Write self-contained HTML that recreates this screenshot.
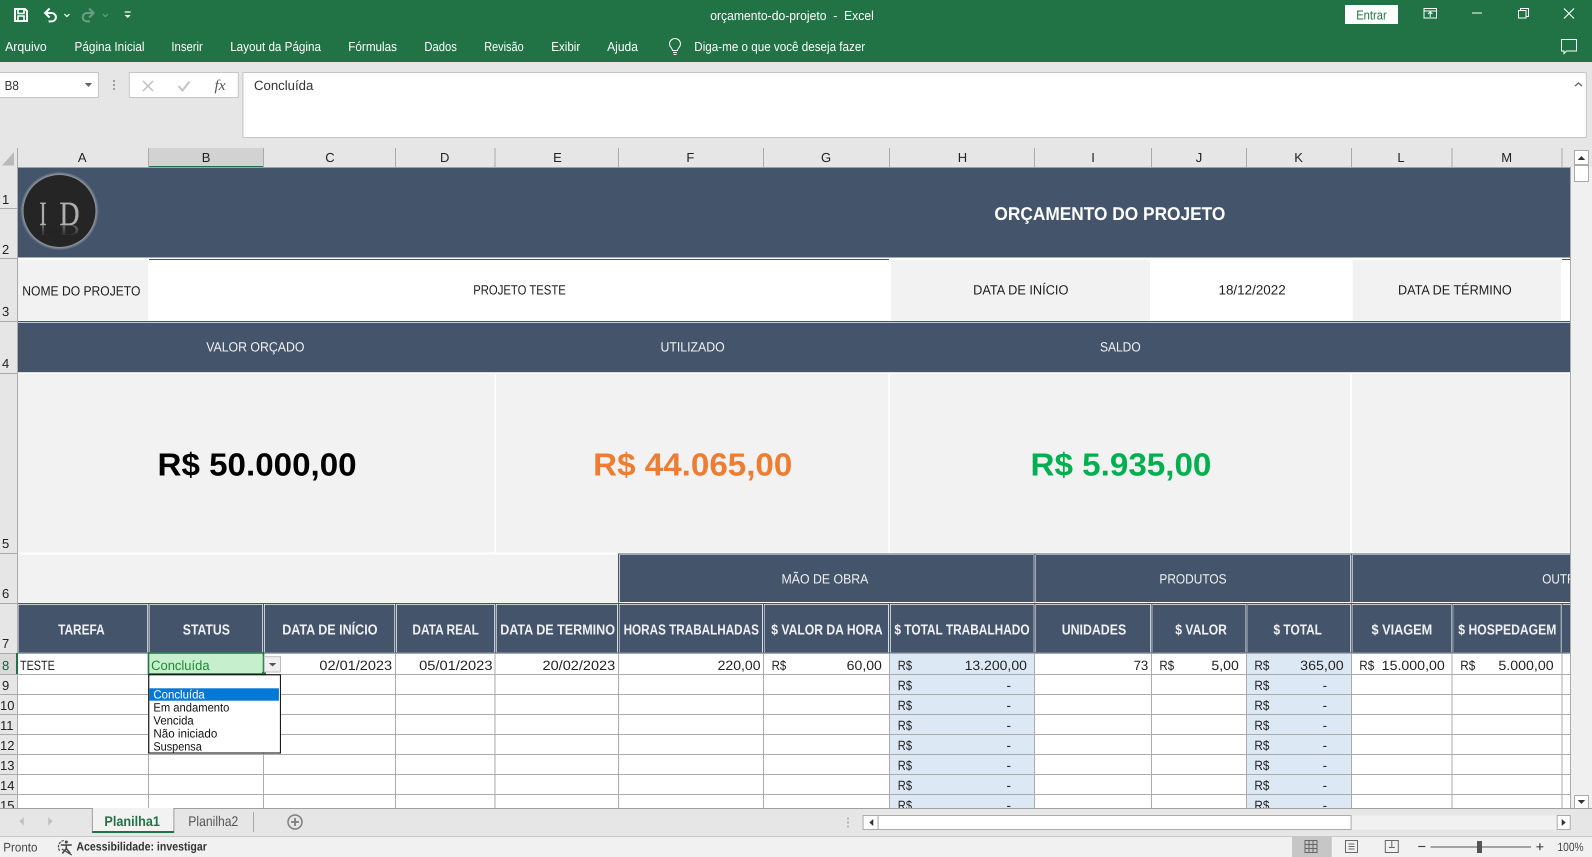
<!DOCTYPE html>
<html lang="pt-BR"><head><meta charset="utf-8"><title>orçamento-do-projeto - Excel</title>
<style>
html,body{margin:0;padding:0;width:1592px;height:857px;overflow:hidden;background:#e6e6e6}
svg{display:block;font-family:"Liberation Sans",sans-serif;text-rendering:geometricPrecision}
.r{font-size:13px;fill:#fff}
.h{font-size:13px;fill:#222}
.n{font-size:13px;fill:#222}
.c{font-size:13.5px;fill:#222}
.l{font-size:13.5px;fill:#1c1c1c}
.w{font-size:13.5px;fill:#f2f2f2}
.b{font-size:14.5px;font-weight:700;fill:#eef0f3}
.big{font-size:32px;font-weight:700}
.d{font-size:12px;fill:#111}
</style></head><body>
<svg width="1592" height="857" viewBox="0 0 1592 857" xmlns="http://www.w3.org/2000/svg">
<defs>
<radialGradient id="glow" cx=".5" cy=".5" r=".5"><stop offset=".9" stop-color="#b5b5b5"/><stop offset="1" stop-color="#8b97a6" stop-opacity=".2"/></radialGradient>
<linearGradient id="fade" x1="0" y1="0" x2="0" y2="1"><stop offset="0" stop-color="#242424" stop-opacity=".15"/><stop offset="1" stop-color="#242424"/></linearGradient>
<clipPath id="sheet"><rect x="0" y="148" width="1570" height="660"/></clipPath>
</defs>
<!-- title bar -->
<rect width="1592" height="62" fill="#217346"/>
<rect y="62" width="1592" height="86" fill="#e6e6e6"/>
<g fill="none" stroke="#fff" stroke-width="2">
<path d="M15 9h10l2 2v10H15z"/><path d="M18 9v4.500h6V9M18 21v-5h6v5" stroke-width="1.600"/>
<g transform="translate(.6 0)"><path d="M49 8.500L44.500 13L49 17.500M45 13H51a4.300 4.200 0 0 1 0 8.400H48"/></g>
<path d="M64.400 14l2.500 2.500 2.500-2.500" stroke-width="1.200"/>
<g opacity=".32" transform="translate(1.100 0)"><path d="M88 8.500L92.500 13L88 17.500M92 13H86a4.300 4.200 0 0 0 0 8.400H89"/><path d="M101.800 14l2.500 2.500 2.500-2.500" stroke-width="1.200"/></g>
<path d="M124.700 12h6" stroke-width="1.200"/>
</g>
<path d="M124.700 15h6l-3 3z" fill="#fff"/>
<text x="710.200" y="20" font-size="13" fill="#fff" textLength="163.600" lengthAdjust="spacingAndGlyphs" xml:space="preserve">orçamento-do-projeto  -  Excel</text>
<rect x="1345" y="5" width="53" height="19" fill="#fff" rx=".5"/>
<text x="1356.200" y="19.500" font-size="13" fill="#217346" textLength="30.500" lengthAdjust="spacingAndGlyphs">Entrar</text>
<g fill="none" stroke="#fff" stroke-width="1">
<g transform="translate(6 0)"><rect x="1418" y="8.500" width="12.500" height="9.500"/><path d="M1418 11h12.500M1424.200 17v-5M1422 14l2.200-2.200 2.200 2.200"/></g>
<path d="M1472 13h10"/>
<g transform="translate(8 0)"><rect x="1510.500" y="10.500" width="7.500" height="7.500"/><path d="M1512.500 10.500v-2h8v8h-2.500"/></g>
<path d="M1564 8.500l10 10M1574 8.500l-10 10" stroke-width="1.100"/>
<path d="M1561.500 39.500h15v11.500h-10l-2.500 2.500v-2.500h-2.500z"/>
</g>
<!-- ribbon tabs -->
<text class="r" x="5.100" y="51" textLength="41.600" lengthAdjust="spacingAndGlyphs">Arquivo</text>
<text class="r" x="74.500" y="51" textLength="70" lengthAdjust="spacingAndGlyphs">Página Inicial</text>
<text class="r" x="171.400" y="51" textLength="31.400" lengthAdjust="spacingAndGlyphs">Inserir</text>
<text class="r" x="230.200" y="51" textLength="90.800" lengthAdjust="spacingAndGlyphs">Layout da Página</text>
<text class="r" x="348.300" y="51" textLength="48.700" lengthAdjust="spacingAndGlyphs">Fórmulas</text>
<text class="r" x="424.400" y="51" textLength="32.400" lengthAdjust="spacingAndGlyphs">Dados</text>
<text class="r" x="484.200" y="51" textLength="39.500" lengthAdjust="spacingAndGlyphs">Revisão</text>
<text class="r" x="551.300" y="51" textLength="28.900" lengthAdjust="spacingAndGlyphs">Exibir</text>
<text class="r" x="607.100" y="51" textLength="30.900" lengthAdjust="spacingAndGlyphs">Ajuda</text>
<path transform="translate(2 0)" d="M670.500 50.500c0-2.500-3-3.500-3-6.500a5.500 5.500 0 0 1 11 0c0 3-3 4-3 6.500zM671 52.500h4M671.500 54.500h3" fill="none" stroke="#fff" stroke-width="1"/>
<text class="r" x="694.300" y="51" textLength="170.900" lengthAdjust="spacingAndGlyphs">Diga-me o que você deseja fazer</text>
<!-- formula bar -->
<rect x="-1" y="72.500" width="99.400" height="25" fill="#fff" stroke="#c6c6c6"/>
<text x="4.600" y="90" font-size="13" fill="#333" textLength="14.200" lengthAdjust="spacingAndGlyphs">B8</text>
<path d="M84.700 83h7.500l-3.750 4z" fill="#666"/>
<g fill="#a0a0a0"><rect x="113" y="80" width="2" height="2"/><rect x="113" y="84" width="2" height="2"/><rect x="113" y="88" width="2" height="2"/></g>
<rect x="129.300" y="72.500" width="109" height="25" fill="#fff" stroke="#c6c6c6"/>
<path d="M143 81l10 10M153 81l-10 10" stroke="#bdbdbd" stroke-width="1.400" fill="none"/>
<path d="M178.500 86l4 4.500 7-9" stroke="#c4c4c4" stroke-width="2" fill="none"/>
<text x="214.500" y="90" font-family="Liberation Serif" font-style="italic" font-size="15" fill="#555" textLength="11" lengthAdjust="spacingAndGlyphs">fx</text>
<rect x="242.900" y="72.500" width="1343.400" height="65" fill="#fff" stroke="#c6c6c6"/>
<text x="254" y="90" font-size="13.500" fill="#333" textLength="59.300" lengthAdjust="spacingAndGlyphs">Concluída</text>
<path d="M1575 86l3.500-3 3.500 3" stroke="#666" stroke-width="1.400" fill="none"/>
<!-- column headers -->
<rect x="148" y="148" width="115.600" height="18" fill="#d2d2d2"/>
<rect x="148" y="166" width="115.600" height="1.700" fill="#217346"/>
<path d="M14 152v13.500H2z" fill="#b9b9b9"/>
<g fill="#ababab"><rect x="148" y="148" width="1" height="19"/><rect x="263" y="148" width="1" height="19"/><rect x="395" y="148" width="1" height="19"/><rect x="494.500" y="148" width="1" height="19"/><rect x="618" y="148" width="1" height="19"/><rect x="763" y="148" width="1" height="19"/><rect x="889" y="148" width="1" height="19"/><rect x="1034" y="148" width="1" height="19"/><rect x="1151" y="148" width="1" height="19"/><rect x="1246" y="148" width="1" height="19"/><rect x="1351" y="148" width="1" height="19"/><rect x="1451.500" y="148" width="1" height="19"/><rect x="1561.500" y="148" width="1" height="19"/><rect x="17" y="148" width="1" height="660"/></g>
<rect x="17" y="167" width="1553" height="1" fill="#a0a0a0"/>
<g>
<text class="h" x="82.200" y="162" text-anchor="middle">A</text><text class="h" x="206.100" y="162" text-anchor="middle">B</text><text class="h" x="330" y="162" text-anchor="middle">C</text><text class="h" x="444.700" y="162" text-anchor="middle">D</text><text class="h" x="557.400" y="162" text-anchor="middle">E</text><text class="h" x="690.400" y="162" text-anchor="middle">F</text><text class="h" x="826" y="162" text-anchor="middle">G</text><text class="h" x="962.500" y="162" text-anchor="middle">H</text><text class="h" x="1093" y="162" text-anchor="middle">I</text><text class="h" x="1199" y="162" text-anchor="middle">J</text><text class="h" x="1298.600" y="162" text-anchor="middle">K</text><text class="h" x="1401" y="162" text-anchor="middle">L</text><text class="h" x="1506.700" y="162" text-anchor="middle">M</text>
</g>
<!-- right scroll area -->
<rect x="1570" y="167" width="22" height="641" fill="#f0f0f0"/>
<rect x="1574.500" y="150.500" width="14" height="14" fill="#fff" stroke="#ababab"/>
<path d="M1577.700 160h7.500l-3.750-4z" fill="#333"/>
<rect x="1574.500" y="165.500" width="14" height="16" fill="#fff" stroke="#ababab"/>
<rect x="1574.500" y="795.500" width="14" height="13" fill="#fff" stroke="#ababab"/>
<path d="M1577.700 800h7.500l-3.750 4z" fill="#333"/>
<!-- row headers -->
<rect x="0" y="653" width="17" height="21" fill="#d9d9d9"/>
<g fill="#ababab"><rect y="208" width="17" height="1"/><rect y="258" width="17" height="1"/><rect y="321" width="17" height="1"/><rect y="373" width="17" height="1"/><rect y="553" width="17" height="1"/><rect y="603" width="17" height="1"/><rect y="653" width="17" height="1"/><rect y="674" width="17" height="1"/><rect y="694" width="17" height="1"/><rect y="714" width="17" height="1"/><rect y="734" width="17" height="1"/><rect y="754" width="17" height="1"/><rect y="774" width="17" height="1"/><rect y="794" width="17" height="1"/></g>
<rect x="16" y="653" width="2" height="21" fill="#217346"/>
<g clip-path="url(#sheet)">
<text class="n" x="2" y="204">1</text><text class="n" x="2" y="254">2</text><text class="n" x="2" y="316">3</text><text class="n" x="2" y="368">4</text><text class="n" x="2" y="548">5</text><text class="n" x="2" y="598">6</text><text class="n" x="2" y="648">7</text><text class="n" x="2" y="670" style="fill:#1a5f3a">8</text><text class="n" x="2" y="690">9</text><text class="n" x="0" y="710">10</text><text class="n" x="0" y="730">11</text><text class="n" x="0" y="750">12</text><text class="n" x="0" y="770">13</text><text class="n" x="0" y="790">14</text><text class="n" x="0" y="810">15</text>
</g>
<!-- sheet base -->
<rect x="18" y="168" width="1552" height="640" fill="#fff"/>
<!-- rows 1-2 -->
<rect x="18" y="168" width="1552" height="89.500" fill="#44546a"/>
<circle cx="59.500" cy="211" r="39" fill="url(#glow)"/>
<circle cx="59.500" cy="211" r="36" fill="#252525"/>
<text x="39.500" y="225" font-family="Liberation Serif" font-size="34" fill="#adadad" stroke="#adadad" stroke-width=".4" textLength="7" lengthAdjust="spacingAndGlyphs">I</text>
<text x="59.500" y="225" font-family="Liberation Serif" font-size="34" fill="#adadad" stroke="#adadad" stroke-width=".4" textLength="20" lengthAdjust="spacingAndGlyphs">D</text>
<g transform="matrix(1 0 0 -.45 0 326.300)"><text x="39.500" y="225" font-family="Liberation Serif" font-size="34" fill="#777" textLength="7" lengthAdjust="spacingAndGlyphs">I</text><text x="59.500" y="225" font-family="Liberation Serif" font-size="34" fill="#777" textLength="20" lengthAdjust="spacingAndGlyphs">D</text></g>
<rect x="36" y="225" width="47" height="13" fill="url(#fade)"/>
<text x="994.400" y="220" font-size="18.500" font-weight="700" fill="#fff" textLength="231" lengthAdjust="spacingAndGlyphs">ORÇAMENTO DO PROJETO</text>
<!-- row 3 -->
<rect x="149" y="259" width="740" height="1" fill="#44546a"/>
<rect x="1562" y="259" width="8" height="1" fill="#44546a"/>
<rect x="18" y="260" width="130" height="60.500" fill="#f2f2f2"/>
<rect x="891" y="260" width="259" height="60.500" fill="#f2f2f2"/>
<rect x="1352.600" y="260" width="208.200" height="60.500" fill="#f2f2f2"/>
<text class="l" x="22.300" y="295.500" textLength="118.100" lengthAdjust="spacingAndGlyphs">NOME DO PROJETO</text>
<text class="l" x="473.200" y="294.500" textLength="92.600" lengthAdjust="spacingAndGlyphs">PROJETO TESTE</text>
<text class="l" x="973.100" y="294.500" textLength="95.300" lengthAdjust="spacingAndGlyphs">DATA DE INÍCIO</text>
<text class="l" x="1218.500" y="294.500" textLength="67.200" lengthAdjust="spacingAndGlyphs">18/12/2022</text>
<text class="l" x="1398" y="294.500" textLength="113.700" lengthAdjust="spacingAndGlyphs">DATA DE TÉRMINO</text>
<rect x="18" y="321" width="1552" height="1" fill="#44546a"/>
<!-- row 4 -->
<rect x="18" y="322.700" width="1552" height="49.500" fill="#44546a"/>
<text class="w" x="206.200" y="351.500" textLength="98.300" lengthAdjust="spacingAndGlyphs">VALOR ORÇADO</text>
<text class="w" x="660.500" y="351.500" textLength="64.200" lengthAdjust="spacingAndGlyphs">UTILIZADO</text>
<text class="w" x="1100" y="351.500" textLength="40.700" lengthAdjust="spacingAndGlyphs">SALDO</text>
<!-- row 5 -->
<rect x="18" y="374" width="476.500" height="178.500" fill="#f2f2f2"/>
<rect x="496" y="374" width="392.200" height="178.500" fill="#f2f2f2"/>
<rect x="890" y="374" width="460" height="178.500" fill="#f2f2f2"/>
<rect x="1352" y="374" width="218" height="178.500" fill="#f2f2f2"/>
<text class="big" x="157.500" y="475.500" fill="#000" textLength="199.100" lengthAdjust="spacingAndGlyphs">R$ 50.000,00</text>
<text class="big" x="593.200" y="475.500" fill="#ed7d31" textLength="199.100" lengthAdjust="spacingAndGlyphs">R$ 44.065,00</text>
<text class="big" x="1030.500" y="475.500" fill="#00b050" textLength="180.900" lengthAdjust="spacingAndGlyphs">R$ 5.935,00</text>
<!-- row 6 -->
<rect x="18" y="554.500" width="600" height="48" fill="#f2f2f2"/>
<rect x="618" y="553.500" width="952" height="1" fill="#44546a"/>
<rect x="619.700" y="555" width="414" height="47" fill="#44546a"/>
<rect x="1035.800" y="555" width="314.300" height="47" fill="#44546a"/>
<rect x="1352.600" y="555" width="217.400" height="47" fill="#44546a"/>
<rect x="618" y="553.500" width="1" height="49" fill="#44546a"/><rect x="1034.300" y="553.500" width="1" height="49" fill="#44546a"/><rect x="1350.800" y="553.500" width="1" height="49" fill="#44546a"/>
<text class="w" x="781.500" y="583.500" textLength="86.900" lengthAdjust="spacingAndGlyphs">MÃO DE OBRA</text>
<text class="w" x="1159.400" y="583.500" textLength="67.200" lengthAdjust="spacingAndGlyphs">PRODUTOS</text>
<svg x="1538" y="560" width="32" height="40"><text class="w" x="4.300" y="23.500" textLength="50" lengthAdjust="spacingAndGlyphs">OUTROS</text></svg>
<!-- row 7 -->
<rect x="18" y="603" width="1552" height="1" fill="#44546a"/>
<rect x="18" y="652.500" width="1552" height="1" fill="#44546a"/>
<g fill="#44546a">
<rect x="18.500" y="604.700" width="128.800" height="47.600"/><rect x="149.800" y="604.700" width="112.500" height="47.600"/><rect x="264.700" y="604.700" width="129.700" height="47.600"/><rect x="396.800" y="604.700" width="97.300" height="47.600"/><rect x="496.600" y="604.700" width="120.600" height="47.600"/><rect x="619.500" y="604.700" width="142.700" height="47.600"/><rect x="764.500" y="604.700" width="123.700" height="47.600"/><rect x="890.700" y="604.700" width="143" height="47.600"/><rect x="1035.800" y="604.700" width="114.500" height="47.600"/><rect x="1152.600" y="604.700" width="93" height="47.600"/><rect x="1247.600" y="604.700" width="102.500" height="47.600"/><rect x="1352.400" y="604.700" width="98.800" height="47.600"/><rect x="1453.200" y="604.700" width="107.600" height="47.600"/><rect x="1562.500" y="604.700" width="7.500" height="47.600"/>
<rect x="148.300" y="603" width="1" height="50"/><rect x="263" y="603" width="1" height="50"/><rect x="395.100" y="603" width="1" height="50"/><rect x="494.800" y="603" width="1" height="50"/><rect x="618" y="603" width="1" height="50"/><rect x="763" y="603" width="1" height="50"/><rect x="889" y="603" width="1" height="50"/><rect x="1034.300" y="603" width="1" height="50"/><rect x="1151.300" y="603" width="1" height="50"/><rect x="1246.300" y="603" width="1" height="50"/><rect x="1350.800" y="603" width="1" height="50"/><rect x="1451.700" y="603" width="1" height="50"/><rect x="1561.500" y="603" width="1" height="50"/>
</g>
<text class="b" x="58.100" y="634.300" textLength="46.600" lengthAdjust="spacingAndGlyphs">TAREFA</text>
<text class="b" x="182.800" y="634.300" textLength="47.100" lengthAdjust="spacingAndGlyphs">STATUS</text>
<text class="b" x="282.200" y="634.300" textLength="95.300" lengthAdjust="spacingAndGlyphs">DATA DE INÍCIO</text>
<text class="b" x="412.400" y="634.300" textLength="66.500" lengthAdjust="spacingAndGlyphs">DATA REAL</text>
<text class="b" x="500.200" y="634.300" textLength="114.800" lengthAdjust="spacingAndGlyphs">DATA DE TERMINO</text>
<text class="b" x="623.600" y="634.300" textLength="135.300" lengthAdjust="spacingAndGlyphs">HORAS TRABALHADAS</text>
<text class="b" x="771.300" y="634.300" textLength="111.300" lengthAdjust="spacingAndGlyphs">$ VALOR DA HORA</text>
<text class="b" x="894.400" y="634.300" textLength="135.200" lengthAdjust="spacingAndGlyphs">$ TOTAL TRABALHADO</text>
<text class="b" x="1061.700" y="634.300" textLength="64.500" lengthAdjust="spacingAndGlyphs">UNIDADES</text>
<text class="b" x="1175.300" y="634.300" textLength="51.600" lengthAdjust="spacingAndGlyphs">$ VALOR</text>
<text class="b" x="1273.500" y="634.300" textLength="48.400" lengthAdjust="spacingAndGlyphs">$ TOTAL</text>
<text class="b" x="1371.500" y="634.300" textLength="60.700" lengthAdjust="spacingAndGlyphs">$ VIAGEM</text>
<text class="b" x="1458.300" y="634.300" textLength="98.100" lengthAdjust="spacingAndGlyphs">$ HOSPEDAGEM</text>
<!-- data area fills -->
<rect x="889.500" y="654" width="144.500" height="154" fill="#dce9f5"/>
<rect x="1246.800" y="654" width="104.200" height="154" fill="#dce9f5"/>
<rect x="149" y="654" width="114" height="20" fill="#c6efce"/>
<!-- gridlines -->
<g fill="#ababab">
<rect x="18" y="674" width="1552" height="1"/><rect x="18" y="694" width="1552" height="1"/><rect x="18" y="714" width="1552" height="1"/><rect x="18" y="734" width="1552" height="1"/><rect x="18" y="754" width="1552" height="1"/><rect x="18" y="774" width="1552" height="1"/><rect x="18" y="794" width="1552" height="1"/>
<rect x="148" y="653" width="1" height="155"/><rect x="263" y="653" width="1" height="155"/><rect x="395" y="653" width="1" height="155"/><rect x="494.500" y="653" width="1" height="155"/><rect x="618" y="653" width="1" height="155"/><rect x="763" y="653" width="1" height="155"/><rect x="889" y="653" width="1" height="155"/><rect x="1034" y="653" width="1" height="155"/><rect x="1151" y="653" width="1" height="155"/><rect x="1246" y="653" width="1" height="155"/><rect x="1351" y="653" width="1" height="155"/><rect x="1451.500" y="653" width="1" height="155"/><rect x="1561.500" y="653" width="1" height="155"/>
<rect x="1570" y="167" width="1" height="642"/>
</g>
<!-- row 8 text -->
<text class="c" x="20" y="670" textLength="34.800" lengthAdjust="spacingAndGlyphs">TESTE</text>
<text class="c" x="151.100" y="670" style="fill:#1f8a2f" textLength="58.500" lengthAdjust="spacingAndGlyphs">Concluída</text>
<text class="c" x="319.400" y="670" textLength="72.700" lengthAdjust="spacingAndGlyphs">02/01/2023</text>
<text class="c" x="419.100" y="670" textLength="73.400" lengthAdjust="spacingAndGlyphs">05/01/2023</text>
<text class="c" x="542.500" y="670" textLength="72.700" lengthAdjust="spacingAndGlyphs">20/02/2023</text>
<text class="c" x="717.600" y="670" textLength="42.900" lengthAdjust="spacingAndGlyphs">220,00</text>
<text class="c" x="771.600" y="670" textLength="14.600" lengthAdjust="spacingAndGlyphs">R$</text>
<text class="c" x="846.700" y="670" textLength="35.200" lengthAdjust="spacingAndGlyphs">60,00</text>
<text class="c" x="897.800" y="670" textLength="14.200" lengthAdjust="spacingAndGlyphs">R$</text>
<text class="c" x="964.600" y="670" textLength="62.300" lengthAdjust="spacingAndGlyphs">13.200,00</text>
<text class="c" x="1133.600" y="670" textLength="14.700" lengthAdjust="spacingAndGlyphs">73</text>
<text class="c" x="1159.400" y="670" textLength="14.700" lengthAdjust="spacingAndGlyphs">R$</text>
<text class="c" x="1211.400" y="670" textLength="27.400" lengthAdjust="spacingAndGlyphs">5,00</text>
<text class="c" x="1254.400" y="670" textLength="15" lengthAdjust="spacingAndGlyphs">R$</text>
<text class="c" x="1300.200" y="670" textLength="43.500" lengthAdjust="spacingAndGlyphs">365,00</text>
<text class="c" x="1359.300" y="670" textLength="15" lengthAdjust="spacingAndGlyphs">R$</text>
<text class="c" x="1381.700" y="670" textLength="63.100" lengthAdjust="spacingAndGlyphs">15.000,00</text>
<text class="c" x="1460.300" y="670" textLength="15" lengthAdjust="spacingAndGlyphs">R$</text>
<text class="c" x="1498.400" y="670" textLength="55.300" lengthAdjust="spacingAndGlyphs">5.000,00</text>
<!-- R$ / dash columns -->
<g clip-path="url(#sheet)">
<text class="c" x="897.800" y="690" textLength="14.200" lengthAdjust="spacingAndGlyphs">R$</text><text class="c" x="1006.500" y="690">-</text>
<text class="c" x="897.800" y="710" textLength="14.200" lengthAdjust="spacingAndGlyphs">R$</text><text class="c" x="1006.500" y="710">-</text>
<text class="c" x="897.800" y="730" textLength="14.200" lengthAdjust="spacingAndGlyphs">R$</text><text class="c" x="1006.500" y="730">-</text>
<text class="c" x="897.800" y="750" textLength="14.200" lengthAdjust="spacingAndGlyphs">R$</text><text class="c" x="1006.500" y="750">-</text>
<text class="c" x="897.800" y="770" textLength="14.200" lengthAdjust="spacingAndGlyphs">R$</text><text class="c" x="1006.500" y="770">-</text>
<text class="c" x="897.800" y="790" textLength="14.200" lengthAdjust="spacingAndGlyphs">R$</text><text class="c" x="1006.500" y="790">-</text>
<text class="c" x="897.800" y="810" textLength="14.200" lengthAdjust="spacingAndGlyphs">R$</text><text class="c" x="1006.500" y="810">-</text>
<text class="c" x="1254.400" y="690" textLength="15" lengthAdjust="spacingAndGlyphs">R$</text><text class="c" x="1322.600" y="690">-</text>
<text class="c" x="1254.400" y="710" textLength="15" lengthAdjust="spacingAndGlyphs">R$</text><text class="c" x="1322.600" y="710">-</text>
<text class="c" x="1254.400" y="730" textLength="15" lengthAdjust="spacingAndGlyphs">R$</text><text class="c" x="1322.600" y="730">-</text>
<text class="c" x="1254.400" y="750" textLength="15" lengthAdjust="spacingAndGlyphs">R$</text><text class="c" x="1322.600" y="750">-</text>
<text class="c" x="1254.400" y="770" textLength="15" lengthAdjust="spacingAndGlyphs">R$</text><text class="c" x="1322.600" y="770">-</text>
<text class="c" x="1254.400" y="790" textLength="15" lengthAdjust="spacingAndGlyphs">R$</text><text class="c" x="1322.600" y="790">-</text>
<text class="c" x="1254.400" y="810" textLength="15" lengthAdjust="spacingAndGlyphs">R$</text><text class="c" x="1322.600" y="810">-</text>
</g>
<!-- selected cell + dropdown -->
<rect x="148.500" y="653" width="115" height="21" fill="none" stroke="#217346" stroke-width="1.600"/>
<rect x="262" y="672" width="4" height="4" fill="#217346"/>
<rect x="264.300" y="656.700" width="16.200" height="15.300" fill="#f0f0f0" stroke="#bdbdbd" stroke-width="1"/>
<path d="M268.800 663h7.500l-3.750 3.500z" fill="#555"/>
<rect x="148.800" y="674.800" width="131.600" height="78.200" fill="#fff" stroke="#000" stroke-width="1"/>
<rect x="149.500" y="688.300" width="129.400" height="12.400" fill="#0078d7"/>
<text class="d" x="153.400" y="698.500" style="fill:#fff" textLength="51.400" lengthAdjust="spacingAndGlyphs">Concluída</text>
<text class="d" x="153.400" y="711.700" textLength="76" lengthAdjust="spacingAndGlyphs">Em andamento</text>
<text class="d" x="153.400" y="724.700" textLength="40.300" lengthAdjust="spacingAndGlyphs">Vencida</text>
<text class="d" x="153.400" y="737.700" textLength="63.900" lengthAdjust="spacingAndGlyphs">Não iniciado</text>
<text class="d" x="153.400" y="750.500" textLength="48.400" lengthAdjust="spacingAndGlyphs">Suspensa</text>
<!-- tab bar -->
<rect y="808" width="1592" height="1" fill="#a0a0a0"/>
<rect y="809" width="1592" height="27" fill="#e6e6e6"/>
<path d="M23.800 817v8.500l-4.500-4.250z" fill="#c0c0c0"/><path d="M48.200 817v8.500l4.500-4.250z" fill="#c0c0c0"/>
<rect x="92.300" y="808" width="81.600" height="25" fill="#f2f2f2"/>
<path d="M92.300 808v25M173.900 808v25" stroke="#8a8a8a" stroke-width=".8" fill="none"/>
<rect x="92.300" y="831" width="81.600" height="2" fill="#217346"/>
<text x="104.400" y="826" font-size="14" font-weight="700" fill="#217346" textLength="55.500" lengthAdjust="spacingAndGlyphs">Planilha1</text>
<text x="188.300" y="826" font-size="14" fill="#555" textLength="50" lengthAdjust="spacingAndGlyphs">Planilha2</text>
<rect x="253" y="812" width="1" height="20" fill="#a8a8a8"/>
<circle cx="295" cy="822" r="7" fill="none" stroke="#7f7f7f" stroke-width="1.500"/>
<path d="M291 822h8M295 818v8" stroke="#7f7f7f" stroke-width="1.800"/>
<g fill="#b5b5b5"><rect x="847" y="817.500" width="2" height="2"/><rect x="847" y="821.500" width="2" height="2"/><rect x="847" y="825.500" width="2" height="2"/></g>
<rect x="1351" y="815.500" width="206" height="14" fill="#f1f1f1"/>
<rect x="863.100" y="815.500" width="15" height="14" fill="#fff" stroke="#ababab"/>
<path d="M873.300 819v7l-4-3.500z" fill="#333"/>
<rect x="878.100" y="815.500" width="473" height="14" fill="#fff" stroke="#ababab"/>
<rect x="1557.200" y="815.500" width="13" height="14" fill="#fff" stroke="#ababab"/>
<path d="M1561.700 819v7l4-3.500z" fill="#333"/>
<!-- status bar -->
<rect y="836" width="1592" height="1" fill="#c8c8c8"/>
<rect y="837" width="1592" height="20" fill="#f1f1f1"/>
<text x="3.300" y="851.500" font-size="12.500" fill="#444" textLength="34.200" lengthAdjust="spacingAndGlyphs">Pronto</text>
<g transform="translate(.8 0)">
<path d="M63 840.500a6.500 6.500 0 0 0-3.500 11" fill="none" stroke="#555" stroke-width="1.300" stroke-dasharray="2.500 1"/>
<circle cx="65.500" cy="842" r="1.500" fill="#444"/>
<path d="M60 845h11M65.500 845v3.500l-4 5M65.500 848.500l4 5" fill="none" stroke="#444" stroke-width="1.500"/>
<path d="M61 849l10 6" stroke="#444" stroke-width="1.200"/>
</g>
<text x="76.400" y="850.700" font-size="12" font-weight="700" fill="#333" textLength="130.500" lengthAdjust="spacingAndGlyphs">Acessibilidade: investigar</text>
<rect x="1292" y="837" width="39.700" height="20" fill="#c6c6c6"/>
<g fill="none" stroke="#666" stroke-width="1">
<g transform="translate(4.500 0)"><path d="M1300.500 840.500h12v12h-12zM1304.500 840.500v12M1308.500 840.500v12M1300.500 844.500h12M1300.500 848.500h12"/></g>
<g transform="translate(5 0)"><path d="M1340.500 840.500h12v12h-12zM1343.500 844h6M1343.500 846.500h6M1343.500 849h6"/></g>
<g transform="translate(5.800 0)"><path d="M1379.500 840.500h13v12h-13zM1386 840.500v7h-3M1386 847.500h3"/></g>
</g>
<path d="M1418.300 846.500h7" stroke="#444" stroke-width="1.200"/>
<rect x="1430.500" y="846.500" width="100.500" height="1" fill="#555"/>
<rect x="1477" y="841" width="5" height="12" fill="#555"/>
<path d="M1536.400 846.800h7M1539.900 843.300v7" stroke="#444" stroke-width="1.200"/>
<text x="1557.500" y="851" font-size="12" fill="#444" textLength="26.100" lengthAdjust="spacingAndGlyphs">100%</text>
</svg>
</body></html>
